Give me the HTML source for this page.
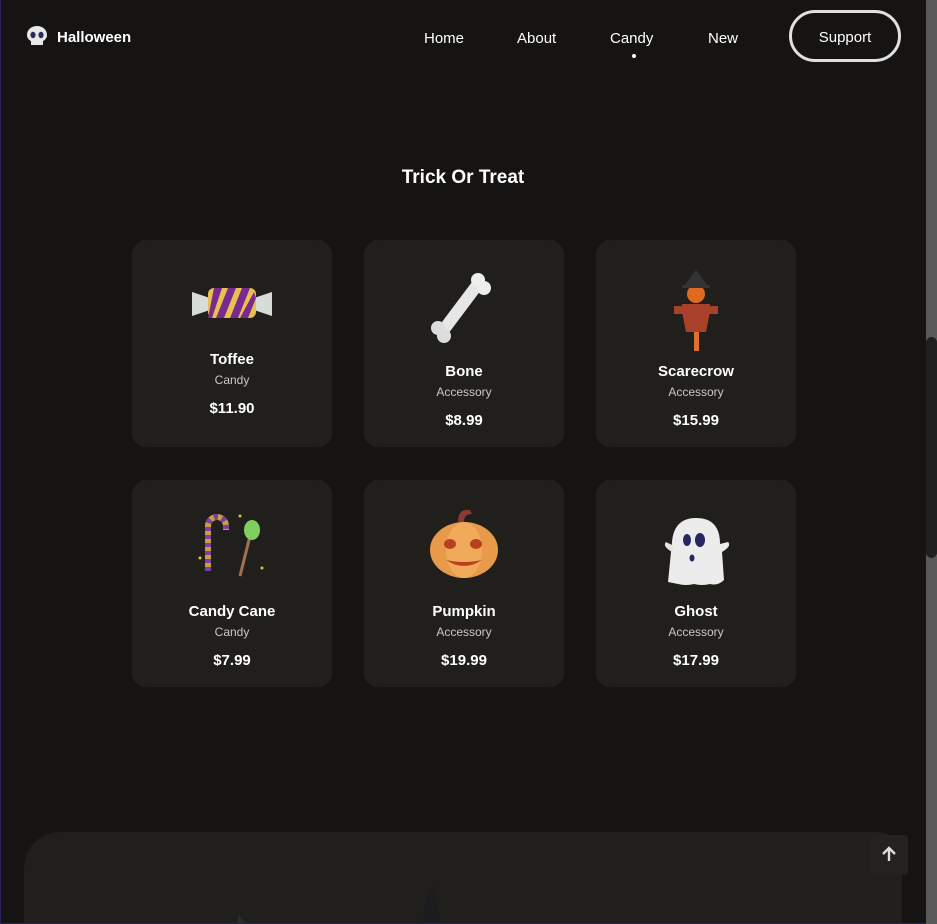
<!DOCTYPE html>
<html><head><style>
*{margin:0;padding:0;box-sizing:border-box}
html,body{width:937px;height:924px;overflow:hidden;background:#151413;font-family:"Liberation Sans",sans-serif;color:#fff}
.a{position:absolute}
.nav{font-size:15px;color:#fff;top:30px}
.card{position:absolute;width:200px;height:207px;background:#201f1c;border-radius:14px}
.card .t{position:absolute;left:0;width:200px;text-align:center}
.nm{font-size:15px;font-weight:bold}
.ct{font-size:12px;color:#c8c8c8}
.pr{font-size:15px;font-weight:bold}
.img{position:absolute;left:50px;width:100px}
</style></head><body>
<div class="a" style="left:0;top:0;width:1px;height:924px;background:#2a2060"></div>
<div class="a" style="left:0;top:923px;width:937px;height:1px;background:#2a2060"></div>
<svg class="a" style="left:26px;top:25px" width="22" height="22" viewBox="0 0 22 22"><path d="M11 1C5 1 1 5 1 10c0 3 2 5 4 6v4h12v-4c2-1 4-3 4-6 0-5-4-9-10-9z" fill="#e8e8ea"/><ellipse cx="7" cy="10" rx="2.6" ry="3.2" fill="#2c2c5a"/><ellipse cx="15" cy="10" rx="2.6" ry="3.2" fill="#2c2c5a"/></svg>
<div class="a" style="left:57px;top:29px;font-size:15px;font-weight:bold">Halloween</div>
<div class="a nav" style="left:424px">Home</div>
<div class="a nav" style="left:517px">About</div>
<div class="a nav" style="left:610px">Candy</div>
<div class="a" style="left:632px;top:54px;width:4px;height:4px;border-radius:50%;background:#fff"></div>
<div class="a nav" style="left:708px">New</div>
<div class="a" style="left:789px;top:10px;width:112px;height:52px;border:3px solid #e0e0e0;border-radius:26px;text-align:center;line-height:50px;font-size:15px">Support</div>
<div class="a" style="left:0;width:926px;top:167px;text-align:center;font-size:19px;font-weight:bold">Trick Or Treat</div>

<div class="card" style="left:132px;top:240px">
<svg class="img" style="top:38px;height:50px" viewBox="0 0 100 50" width="100" height="50"><path d="M10 14 L28 20 L28 32 L10 38 Z" fill="#d8dcd8"/><path d="M90 14 L72 20 L72 32 L90 38 Z" fill="#d8dcd8"/><rect x="26" y="10" width="48" height="30" rx="6" fill="#e8c050"/><path d="M32 10l8 0-10 30-4 0zM46 10l8 0-12 30-8 0zM60 10l8 0-12 30-8 0zM72 14l2 6-8 20-8 0z" fill="#7a2a8e"/></svg>
<div class="t nm" style="top:111px">Toffee</div><div class="t ct" style="top:133px">Candy</div><div class="t pr" style="top:160px">$11.90</div></div>

<div class="card" style="left:364px;top:240px">
<svg class="img" style="top:30px;height:80px" viewBox="0 0 100 80" width="100" height="80"><path d="M28 62 L64 14" stroke="#e6e6e6" stroke-width="12" stroke-linecap="round"/><circle cx="64" cy="10" r="7" fill="#eee"/><circle cx="70" cy="18" r="7" fill="#eee"/><circle cx="24" cy="58" r="7" fill="#ddd"/><circle cx="30" cy="66" r="7" fill="#ddd"/></svg>
<div class="t nm" style="top:123px">Bone</div><div class="t ct" style="top:145px">Accessory</div><div class="t pr" style="top:172px">$8.99</div></div>

<div class="card" style="left:596px;top:240px">
<svg class="img" style="top:26px;height:90px" viewBox="0 0 100 90" width="100" height="90"><rect x="48" y="50" width="5" height="35" fill="#e07030"/><path d="M36 38h28v8l-4 20h-20l-4-20z" fill="#a8402a"/><rect x="28" y="40" width="44" height="8" fill="#a8402a"/><circle cx="50" cy="28" r="9" fill="#e06a20"/><path d="M38 20h24l-12-16z" fill="#333"/><rect x="36" y="19" width="28" height="3" fill="#333"/></svg>
<div class="t nm" style="top:123px">Scarecrow</div><div class="t ct" style="top:145px">Accessory</div><div class="t pr" style="top:172px">$15.99</div></div>

<div class="card" style="left:132px;top:480px">
<svg class="img" style="top:26px;height:80px" viewBox="0 0 100 80" width="100" height="80"><path d="M26 65 V20 a9 9 0 0 1 18 0 v4" stroke="#c8a040" stroke-width="6" fill="none"/><path d="M26 65 V20 a9 9 0 0 1 18 0 v4" stroke="#7a40a0" stroke-width="6" stroke-dasharray="4 4" fill="none"/><line x1="58" y1="70" x2="68" y2="30" stroke="#a07050" stroke-width="3"/><ellipse cx="70" cy="24" rx="8" ry="10" fill="#80d060"/><circle cx="18" cy="52" r="1.5" fill="#e0c040"/><circle cx="80" cy="62" r="1.5" fill="#e0c040"/><circle cx="58" cy="10" r="1.5" fill="#e0c040"/></svg>
<div class="t nm" style="top:123px">Candy Cane</div><div class="t ct" style="top:145px">Candy</div><div class="t pr" style="top:172px">$7.99</div></div>

<div class="card" style="left:364px;top:480px">
<svg class="img" style="top:24px;height:80px" viewBox="0 0 100 80" width="100" height="80"><path d="M44 18 q0-14 12-12 l2 4 q-8 0-8 8z" fill="#8a3a30"/><ellipse cx="50" cy="46" rx="34" ry="28" fill="#e89a4a"/><ellipse cx="50" cy="46" rx="18" ry="28" fill="#f0aa5a"/><ellipse cx="36" cy="40" rx="6" ry="5" fill="#b84020"/><ellipse cx="62" cy="40" rx="6" ry="5" fill="#b84020"/><path d="M32 56 q18 12 36 0 q-18 4 -36 0z" fill="#b84020"/></svg>
<div class="t nm" style="top:123px">Pumpkin</div><div class="t ct" style="top:145px">Accessory</div><div class="t pr" style="top:172px">$19.99</div></div>

<div class="card" style="left:596px;top:480px">
<svg class="img" style="top:36px;height:70px" viewBox="0 0 100 70" width="100" height="70"><path d="M22 66 q2-20 4-40 q2-24 24-24 q24 0 24 26 l8-2 q4 4-6 10 l2 28 q-6 6-14 4 q-8 2-16 0 q-8 2-16 0z" fill="#ececec"/><path d="M28 30 l-8-4 q-4 4 6 10z" fill="#e4e4e4"/><ellipse cx="41" cy="24" rx="4" ry="6" fill="#262660"/><ellipse cx="54" cy="24" rx="5" ry="7" fill="#262660"/><ellipse cx="46" cy="42" rx="2.5" ry="3.5" fill="#262660"/></svg>
<div class="t nm" style="top:123px">Ghost</div><div class="t ct" style="top:145px">Accessory</div><div class="t pr" style="top:172px">$17.99</div></div>

<div class="a" style="left:24px;top:832px;width:878px;height:91px;background:#201f1c;border-radius:36px 24px 0 0"></div>
<svg class="a" style="left:400px;top:880px" width="50" height="43"><path d="M36 4 q-14 16-12 40 h14 l2-8 q-6-14-4-32z" fill="#1c1c20"/></svg>
<svg class="a" style="left:235px;top:912px" width="12" height="11"><path d="M2 12 L4 2 L10 12z" fill="#2c2c30"/></svg>
<div class="a" style="left:870px;top:835px;width:38px;height:40px;background:#232220;border-radius:3px"></div>
<svg class="a" style="left:881px;top:845px" width="16" height="18"><path d="M8 16V3M2 9l6-6 6 6" stroke="#ddd" stroke-width="2.4" fill="none"/></svg>
<div class="a" style="left:926px;top:0;width:11px;height:924px;background:#5a5a5a"></div>
<div class="a" style="left:926px;top:337px;width:11px;height:221px;background:#202020;border-radius:6px"></div>
</body></html>
